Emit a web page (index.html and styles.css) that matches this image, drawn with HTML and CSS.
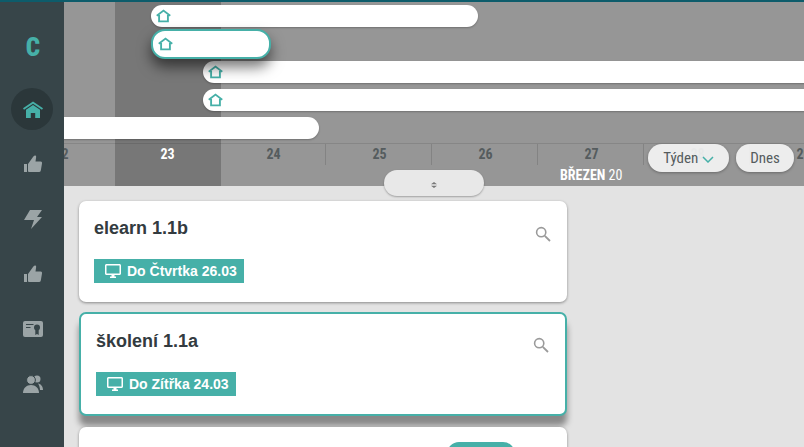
FILE: index.html
```html
<!DOCTYPE html>
<html lang="cs">
<head>
    <meta charset="UTF-8">
    <meta name="viewport" content="width=device-width, initial-scale=1.0">
    <title>Kalendář</title>
    <link rel="stylesheet" href="styles.css">
</head>
<body>
    <svg class="defs" width="0" height="0">
        <symbol id="house" viewBox="0 0 16 14">
            <path d="M.8 6.600 8 1.200l7.200 5.400M3.300 6v6.700h9.400V6" fill="none" stroke="currentColor" stroke-width="2"/>
        </symbol>
        <symbol id="thumb" viewBox="0 0 18 17">
            <path d="M0 9h3v8H0zM4 9l5-7Q10 0 11.500.5 12.500 1 12 3l-.5 3.500h5Q18.300 6.500 18 8.500l-1.200 7Q16.500 17 15 17H5Q4 17 4 16z" fill="currentColor"/>
        </symbol>
        <symbol id="search" viewBox="0 0 16 16">
            <circle cx="6.200" cy="6.200" r="4.600" fill="none" stroke="currentColor" stroke-width="1.600"/>
            <path d="M9.800 9.800 15 15" stroke="currentColor" stroke-width="1.800"/>
        </symbol>
        <symbol id="desktop" viewBox="0 0 16 14">
            <path d="M1.500 0h13C15.300 0 16 .7 16 1.500v8c0 .8-.7 1.500-1.500 1.500H9.500v1.500H11V14H5v-1.500h1.500V11h-5C.7 11 0 10.300 0 9.500v-8C0 .7.700 0 1.500 0zm0 1.500v8h13v-8z" fill="currentColor" fill-rule="evenodd"/>
        </symbol>
    </svg>

    <div class="top-line"></div>

    <div class="app">
        <nav class="sidebar">
            <div class="logo">C</div>
            <a class="nav-item active" href="#">
                <svg width="20" height="18" viewBox="0 0 20 18"><path d="M0 8.300 10 1.500l10 6.800-1 1.400L10 3.700 1 9.700z" fill="currentColor"/><path d="M3 9.800 10 5l7 4.800V18h-4.800v-5H7.800v5H3z" fill="currentColor"/></svg>
            </a>
            <a class="nav-item" href="#"><svg width="18" height="17"><use href="#thumb"/></svg></a>
            <a class="nav-item" href="#">
                <svg width="18" height="20" viewBox="0 0 18 20"><path d="M6 1h12l-5 7h5L7 20l3-9H0z" fill="currentColor"/></svg>
            </a>
            <a class="nav-item" href="#"><svg width="18" height="17"><use href="#thumb"/></svg></a>
            <a class="nav-item" href="#">
                <svg width="20" height="16" viewBox="0 0 20 16">
                    <rect width="20" height="16" rx="2" fill="currentColor"/>
                    <path d="M3 3.500h7.500M3 6.500h4.500" stroke="#374549" stroke-width="1.200"/>
                    <circle cx="14" cy="6.500" r="3" fill="#374549"/>
                    <path d="M12.300 8.500h3.400V14L14 13l-1.700 1z" fill="#374549"/>
                </svg>
            </a>
            <a class="nav-item" href="#">
                <svg width="20" height="18" viewBox="0 0 20 18"><circle cx="14" cy="4" r="3.500" fill="currentColor"/><path d="M15 8.500c3 .5 5 3 5 6.500h-3c0-2.500-1-5-2-6.500z" fill="currentColor"/><circle cx="8" cy="5" r="4.400" fill="currentColor" stroke="#374549"/><path d="M0 18c0-5 3.500-8 8-8s8 3 8 8z" fill="currentColor"/></svg>
            </a>
        </nav>

        <main class="main">
            <section class="timeline">
                <div class="today-band"></div>

                <div class="bars">
                    <div class="bar" style="left: 87px; top: 3px; width: 327px;"><svg class="house" width="15" height="14"><use href="#house"/></svg></div>
                    <div class="bar selected" style="left: 87px; top: 27px; width: 120px;"><svg class="house" width="15" height="14"><use href="#house"/></svg></div>
                    <div class="bar" style="left: 139px; top: 59px; width: 665px;"><svg class="house" width="15" height="14"><use href="#house"/></svg></div>
                    <div class="bar" style="left: 139px; top: 87px; width: 665px;"><svg class="house" width="15" height="14"><use href="#house"/></svg></div>
                    <div class="bar" style="left: -40px; top: 115px; width: 295px;"></div>
                </div>

                <div class="days">
                    <div class="day">22</div>
                    <div class="day today">23</div>
                    <div class="day">24</div>
                    <div class="day">25</div>
                    <div class="day">26</div>
                    <div class="day">27</div>
                    <div class="day">28</div>
                    <div class="day">29</div>
                </div>
                <div class="month"><b>BŘEZEN</b> 20</div>

                <div class="range-btns">
                    <button class="pill-btn week-btn">Týden
                        <svg width="12" height="7" viewBox="0 0 12 7"><path d="M1 1l5 5 5-5" fill="none" stroke="#46b0a8" stroke-width="1.500"/></svg>
                    </button>
                    <button class="pill-btn today-btn">Dnes</button>
                </div>
            </section>

            <button class="handle">
                <svg width="8" height="6" viewBox="0 0 8 6"><path d="M4 0 7 2.200H1zM4 6 1 3.800h6z" fill="#777"/></svg>
            </button>

            <section class="cards">
                <article class="card">
                    <h2 class="card-title">elearn 1.1b</h2>
                    <svg class="card-search" width="16" height="16"><use href="#search"/></svg>
                    <span class="deadline"><svg width="16" height="14"><use href="#desktop"/></svg>Do Čtvrtka 26.03</span>
                </article>
                <article class="card selected">
                    <h2 class="card-title">školení 1.1a</h2>
                    <svg class="card-search" width="16" height="16"><use href="#search"/></svg>
                    <span class="deadline"><svg width="16" height="14"><use href="#desktop"/></svg>Do Zítřka 24.03</span>
                </article>
                <article class="card">
                    <span class="card-pill"></span>
                </article>
            </section>
        </main>
    </div>
</body>
</html>
```

FILE: styles.css
```css
* {
    margin: 0;
    padding: 0;
    box-sizing: border-box;
}

html, body {
    height: 100%;
    overflow: hidden;
}

body {
    font-family: "Liberation Sans", Arial, sans-serif;
    background: #e3e3e3;
    color: #333;
}

.defs {
    position: absolute;
}

.top-line {
    height: 2px;
    background: #0d5c6b;
}

.app {
    display: flex;
    height: 445px;
}

.sidebar {
    width: 64px;
    flex-shrink: 0;
    background: #374549;
    z-index: 2;
}

.logo {
    height: 79px;
    padding: 29px 0 0 2px;
    text-align: center;
    font-family: Roboto, sans-serif;
    font-stretch: 75%;
    font-weight: 900;
    font-size: 25px;
    line-height: 34px;
    color: #46b0a8;
}

.nav-item {
    display: flex;
    align-items: center;
    justify-content: center;
    height: 55px;
    padding-left: 2px;
    color: #9ba4a6;
}

.nav-item.active {
    color: #46b0a8;
    position: relative;
}

.nav-item.active::before {
    content: "";
    position: absolute;
    left: 11px;
    top: 7px;
    width: 42px;
    height: 42px;
    border-radius: 50%;
    background: #2b373a;
}

.nav-item svg {
    position: relative;
}

.main {
    flex: 1;
    min-width: 0;
    position: relative;
    overflow: hidden;
}

.timeline {
    position: relative;
    height: 184px;
    background: #969696;
    overflow: hidden;
}

.today-band {
    position: absolute;
    left: 51px;
    top: 0;
    bottom: 0;
    width: 106px;
    background: #777;
}

.bars {
    position: relative;
    height: 141px;
}

.bar {
    position: absolute;
    height: 22px;
    border-radius: 11px;
    background: #fff;
    box-shadow: 0 1px 2px rgba(0, 0, 0, 0.25);
}

.bar.selected {
    height: 30px;
    top: 27px;
    border-radius: 14px;
    border: 2px solid #46b0a8;
    box-shadow: 0 8px 14px rgba(0, 0, 0, 0.55);
    z-index: 1;
}

.house {
    position: absolute;
    left: 5px;
    top: 4px;
    color: #46b0a8;
}

.bar.selected .house {
    top: 6px;
    left: 5px;
}

.days {
    position: relative;
    display: flex;
    margin-left: -57px;
    height: 22px;
    border-top: 1px solid rgba(0, 0, 0, 0.1);
}

.day {
    width: 106px;
    flex-shrink: 0;
    padding: 2px 0 0 2px;
    text-align: center;
    font-family: Roboto, sans-serif;
    font-stretch: 75%;
    font-weight: 700;
    font-size: 14px;
    line-height: 17px;
    color: #555c5e;
    border-left: 1px solid rgba(0, 0, 0, 0.12);
}

.day.today {
    color: #fff;
    border-left-color: transparent;
}

.day.today + .day {
    border-left-color: transparent;
}

.month {
    position: relative;
    padding: 2px 0 0 496px;
    font-family: Roboto, sans-serif;
    font-stretch: 75%;
    font-size: 14px;
    line-height: 17px;
    color: #fff;
}

.range-btns {
    position: absolute;
    top: 142px;
    right: 10px;
    display: flex;
    gap: 7px;
}

.pill-btn {
    height: 28px;
    border: none;
    border-radius: 14px;
    background: rgba(244, 244, 244, 0.92);
    box-shadow: 0 1px 3px rgba(0, 0, 0, 0.3);
    font-family: Roboto, sans-serif;
    font-stretch: 75%;
    font-size: 15px;
    color: #555c5e;
}

.week-btn {
    width: 81px;
}

.today-btn {
    width: 58px;
}

.handle {
    position: absolute;
    left: 320px;
    top: 168px;
    width: 100px;
    height: 26px;
    border: none;
    border-radius: 13px;
    background: #e8e8e8;
    box-shadow: 0 1px 2px rgba(0, 0, 0, 0.3);
}

.cards {
    padding: 15px 0 0 15px;
    width: 503px;
    display: flex;
    flex-direction: column;
    gap: 10px;
}

.card {
    position: relative;
    flex-shrink: 0;
    height: 101px;
    padding: 15px;
    background: #fff;
    border-radius: 7px;
    box-shadow: 0 1px 3px rgba(0, 0, 0, 0.4);
}

.card.selected {
    height: 104px;
    margin-bottom: 1px;
    border: 2px solid #46b0a8;
    box-shadow: 0 10px 6px rgba(0, 0, 0, 0.4);
}

.card-title {
    font-size: 18px;
    line-height: 24px;
    font-weight: 700;
    color: #333b40;
}

.card-search {
    position: absolute;
    right: 16px;
    top: 25px;
    color: #9a9a9a;
}

.card.selected .card-search {
    right: 16px;
    top: 23px;
}

.deadline {
    display: inline-flex;
    align-items: center;
    gap: 6px;
    height: 24px;
    margin-top: 19px;
    padding: 0 7px 0 11px;
    background: #46b0a8;
    color: #fff;
    font-size: 14px;
    font-weight: 700;
}

.card-pill {
    position: absolute;
    left: 368px;
    top: 15px;
    width: 68px;
    height: 24px;
    border-radius: 12px;
    background: #46b0a8;
}
```
